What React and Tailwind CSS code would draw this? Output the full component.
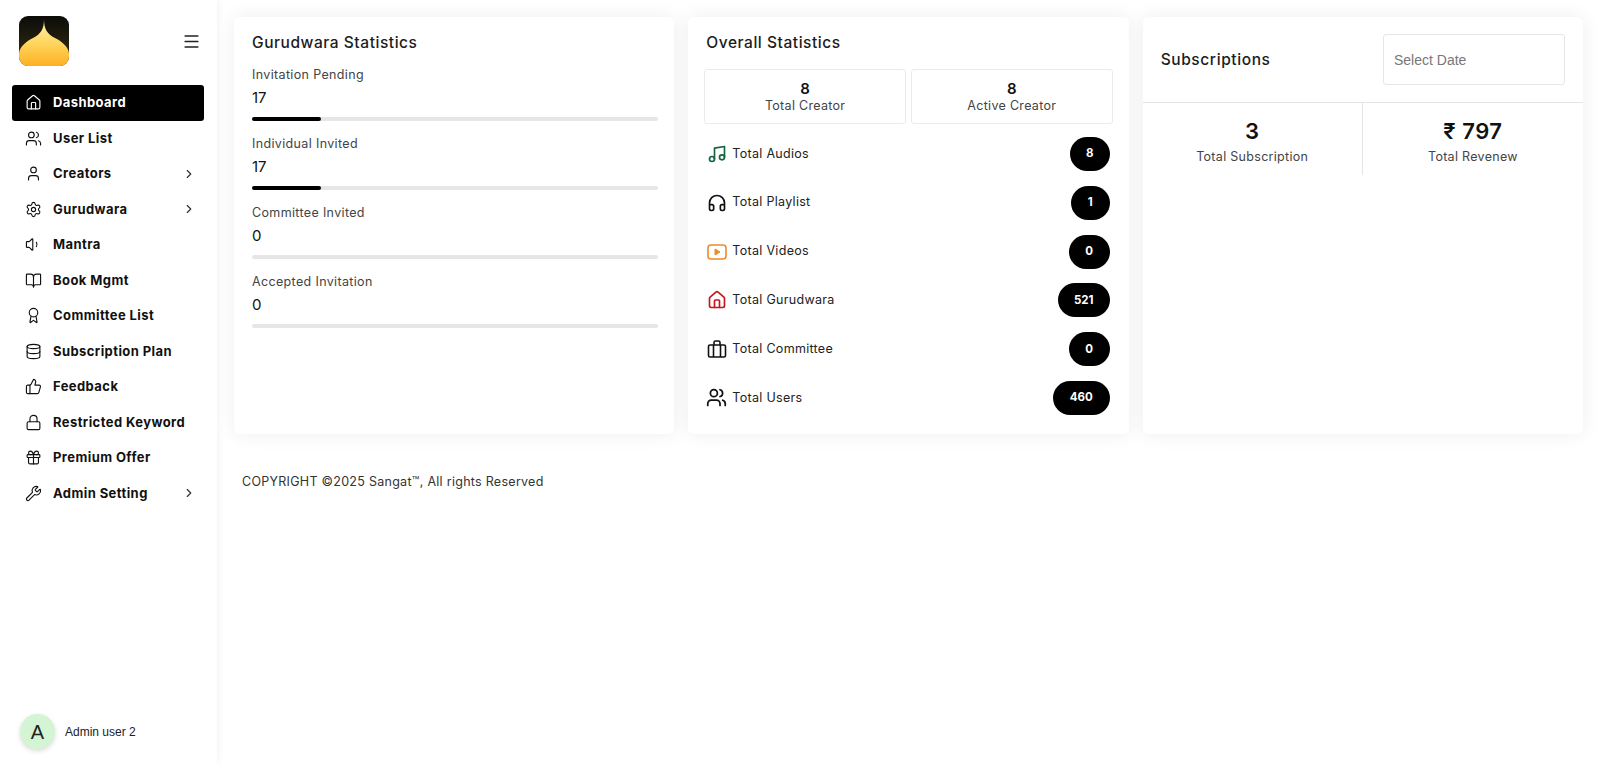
import React from "react";
import {
  Award,
  BookOpen,
  ChevronRight,
  Database,
  Gift,
  Headphones,
  House,
  Lock,
  Menu,
  Music,
  Settings,
  ThumbsUp,
  User,
  Users,
  Volume1,
  Wrench,
} from "lucide-react";

const navItems = [
  { label: "Dashboard", icon: House, active: true },
  { label: "User List", icon: Users },
  { label: "Creators", icon: User, arrow: true },
  { label: "Gurudwara", icon: Settings, arrow: true },
  { label: "Mantra", icon: Volume1 },
  { label: "Book Mgmt", icon: BookOpen },
  { label: "Committee List", icon: Award },
  { label: "Subscription Plan", icon: Database },
  { label: "Feedback", icon: ThumbsUp },
  { label: "Restricted Keyword", icon: Lock },
  { label: "Premium Offer", icon: Gift },
  { label: "Admin Setting", icon: Wrench, arrow: true },
];

const invitations = [
  { label: "Invitation Pending", value: 17, percent: 17 },
  { label: "Individual Invited", value: 17, percent: 17 },
  { label: "Committee Invited", value: 0, percent: 0 },
  { label: "Accepted Invitation", value: 0, percent: 0 },
];

function VideoIcon() {
  return (
    <svg viewBox="0 0 20 16" className="w-5 h-4" fill="none" stroke="#f08a24" strokeWidth="1.6">
      <rect x="1" y="1" width="18" height="14" rx="3" />
      <path d="M8 5l5 3-5 3z" fill="#f08a24" strokeWidth="1" strokeLinejoin="round" />
    </svg>
  );
}

function CaseIcon() {
  return (
    <svg viewBox="0 0 20 20" className="w-5 h-5" fill="none" stroke="#111" strokeWidth="1.6" strokeLinejoin="round">
      <rect x="1.5" y="6" width="17" height="12" rx="1.5" />
      <path d="M6.5 6v12M13.5 6v12M7 6V3.5A1.5 1.5 0 0 1 8.5 2h3A1.5 1.5 0 0 1 13 3.5V6" />
    </svg>
  );
}

const totals = [
  { label: "Total Audios", value: 8, icon: <Music size={20} color="#14653f" />, pill: "w-10" },
  { label: "Total Playlist", value: 1, icon: <Headphones size={20} color="#111" />, pill: "w-[39px]" },
  { label: "Total Videos", value: 0, icon: <VideoIcon />, pill: "w-[41px]" },
  { label: "Total Gurudwara", value: 521, icon: <House size={20} color="#c4161c" />, pill: "w-[52px]" },
  { label: "Total Committee", value: 0, icon: <CaseIcon />, pill: "w-[41px]" },
  { label: "Total Users", value: 460, icon: <Users size={21} color="#111" />, pill: "w-[57px]" },
];

function Logo() {
  return (
    <svg viewBox="0 0 50 50" className="w-[50px] h-[50px]">
      <defs>
        <linearGradient id="bg" x1="0" y1="0" x2="0" y2="1">
          <stop offset="0" stopColor="#0c0c08" />
          <stop offset="1" stopColor="#3a3216" />
        </linearGradient>
        <linearGradient id="dome" x1="0" y1="0" x2="0" y2="1">
          <stop offset="0" stopColor="#fff3b4" />
          <stop offset="0.5" stopColor="#ffd760" />
          <stop offset="1" stopColor="#fdb022" />
        </linearGradient>
      </defs>
      <rect width="50" height="50" rx="9" fill="url(#bg)" />
      <path
        d="M25 3C25 13 28 18 36 22C44 26 50 32 50 38V41A9 9 0 0 1 41 50H9A9 9 0 0 1 0 41V38C0 32 6 26 14 22C22 18 25 13 25 3Z"
        fill="url(#dome)"
      />
    </svg>
  );
}

function Sidebar() {
  return (
    <aside className="w-[217px] h-[763px] shrink-0 flex flex-col justify-between bg-white shadow-[0_0_8px_rgba(0,0,0,0.07)] pb-[14px]">
      <div>
        <div className="flex items-center justify-between pl-[19px] pr-[16px] pt-[16px]">
          <Logo />
          <Menu size={19} color="#222" />
        </div>
        <nav className="mt-[19px] ml-[12px] w-[192px] flex flex-col">
          {navItems.map((item) => {
            const Icon = item.icon;
            return (
              <a
                key={item.label}
                href="#"
                className={
                  item.active
                    ? "h-[35.5px] flex items-center pl-[13px] pr-[8px] rounded-[3px] bg-black text-white"
                    : "h-[35.5px] flex items-center pl-[13px] pr-[8px] text-[#111]"
                }
              >
                <Icon size={17} strokeWidth={1.6} className="shrink-0" />
                <span className="ml-[11px] flex-1 text-[13px] font-bold tracking-[0.42px]">{item.label}</span>
                {item.arrow && <ChevronRight size={14} color="#333" />}
              </a>
            );
          })}
        </nav>
      </div>
      <div className="flex items-center pl-[20px]">
        <div className="w-[35px] h-[35px] rounded-full bg-[#d3f5d3] shadow-[0_2px_5px_rgba(0,0,0,0.15)] flex items-center justify-center font-['Liberation_Sans',sans-serif] text-[20px] text-[#222]">
          A
        </div>
        <span className="ml-[10px] font-['Liberation_Sans',sans-serif] text-[12px] text-[#222]">Admin user 2</span>
      </div>
    </aside>
  );
}

function GurudwaraCard() {
  return (
    <section className="bg-white rounded-md shadow-[0_0_20px_rgba(0,0,0,0.07)] pl-[18px] pr-[16px] pt-[16px]">
      <h2 className="text-[15.5px] leading-5 font-medium text-[#1c1c1c] tracking-[0.55px]">Gurudwara Statistics</h2>
      <div className="mt-[14px] flex flex-col gap-[15px]">
        {invitations.map((row) => (
          <div key={row.label}>
            <div className="text-[12.5px] leading-4 text-[#444] tracking-[0.35px]">{row.label}</div>
            <div className="mt-[5px] text-[15px] leading-5 text-[#111]">{row.value}</div>
            <div className="mt-[9px] h-1 rounded-full bg-[#e6e6e6]">
              <div className="h-1 rounded-full bg-black" style={{ width: `${row.percent}%` }} />
            </div>
          </div>
        ))}
      </div>
    </section>
  );
}

function OverallCard() {
  return (
    <section className="bg-white rounded-md shadow-[0_0_20px_rgba(0,0,0,0.07)] px-[16px] pt-[16px]">
      <h2 className="pl-[2px] text-[15.5px] leading-5 font-medium text-[#1c1c1c] tracking-[0.55px]">Overall Statistics</h2>
      <div className="mt-[16px] grid grid-cols-2 gap-[5px]">
        {[
          ["Total Creator", 8],
          ["Active Creator", 8],
        ].map(([label, value]) => (
          <div key={label} className="h-[55px] border border-[#ebebeb] rounded-[3px] flex flex-col items-center justify-center">
            <div className="text-[15px] leading-[19px] font-semibold text-[#111]">{value}</div>
            <div className="text-[12.5px] leading-4 text-[#444] tracking-[0.3px]">{label}</div>
          </div>
        ))}
      </div>
      <div className="mt-[13px] flex flex-col gap-[14.8px]">
        {totals.map((row) => (
          <div key={row.label} className="h-[34px] flex items-center justify-between pl-[2px] pr-[3px]">
            <div className="flex items-center">
              <span className="w-[21px] flex justify-center">{row.icon}</span>
              <span className="ml-[5px] text-[12.5px] text-[#222] tracking-[0.3px]">{row.label}</span>
            </div>
            <div className={`${row.pill} h-[34px] rounded-[17px] bg-black text-white text-[11.5px] font-bold flex items-center justify-center`}>
              {row.value}
            </div>
          </div>
        ))}
      </div>
    </section>
  );
}

function SubscriptionCard() {
  return (
    <section className="bg-white rounded-md shadow-[0_0_20px_rgba(0,0,0,0.07)]">
      <div className="h-[86px] border-b border-[#e4e4e4] flex items-center justify-between pl-[18px] pr-[18px]">
        <h2 className="text-[15.5px] font-medium text-[#1c1c1c] tracking-[0.6px]">Subscriptions</h2>
        <input
          placeholder="Select Date"
          className="w-[182px] h-[51px] px-[10px] border border-[#e6e6e6] rounded-[3px] font-['Liberation_Sans',sans-serif] text-[14px] placeholder:text-[#777] outline-none"
        />
      </div>
      <div className="grid grid-cols-2 h-[72px]">
        {[
          ["3", "Total Subscription"],
          ["₹ 797", "Total Revenew"],
        ].map(([value, label], i) => (
          <div key={label} className={i === 0 ? "border-r border-[#e4e4e4] flex flex-col items-center pt-[14px]" : "flex flex-col items-center pt-[14px]"}>
            <div className="text-[22px] leading-[28px] font-semibold text-[#111] tracking-[0.5px]">{value}</div>
            <div className="mt-[4px] text-[12.5px] leading-4 text-[#444] tracking-[0.3px]">{label}</div>
          </div>
        ))}
      </div>
    </section>
  );
}

export default function App() {
  return (
    <div className="w-[1600px] h-[763px] flex overflow-hidden bg-white font-['Inter',sans-serif]">
      <Sidebar />
      <main className="flex-1 pt-[17px] px-[17px]">
        <div className="grid grid-cols-3 gap-[14px] h-[417px]">
          <GurudwaraCard />
          <OverallCard />
          <SubscriptionCard />
        </div>
        <footer className="mt-[40px] pl-[8px] text-[12.5px] leading-4 text-[#333] tracking-[0.28px]">
          COPYRIGHT ©2025 Sangat™, All rights Reserved
        </footer>
      </main>
    </div>
  );
}
